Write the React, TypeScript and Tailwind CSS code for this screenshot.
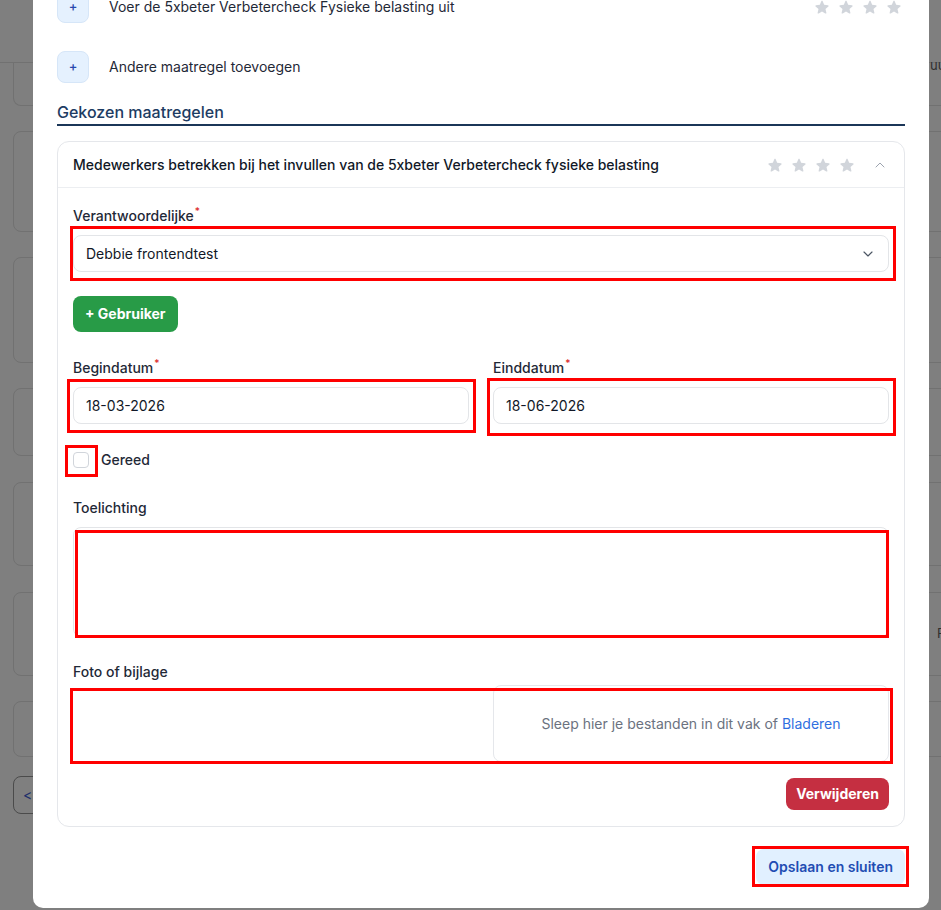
import React from "react";
import { ChevronDown, ChevronUp } from "lucide-react";

const STAR =
  "M10.868 2.884c-.321-.772-1.415-.772-1.736 0l-1.83 4.401-4.753.381c-.833.067-1.171 1.107-.536 1.651l3.62 3.102-1.106 4.637c-.194.813.691 1.456 1.405 1.02L10 15.591l4.069 2.485c.713.436 1.598-.207 1.404-1.02l-1.106-4.637 3.62-3.102c.635-.544.297-1.584-.536-1.65l-4.752-.382-1.831-4.401Z";

function Stars() {
  return (
    <div className="flex items-center gap-2">
      {[0, 1, 2, 3].map((i) => (
        <svg key={i} viewBox="0 0 20 20" className="h-4 w-4 fill-[#d1d5db]">
          <path d={STAR} />
        </svg>
      ))}
    </div>
  );
}

function Mark({ className }: { className: string }) {
  return <div className={"pointer-events-none absolute border-[3px] border-[#ff0000] " + className} />;
}

function Label({ children, required }: { children: React.ReactNode; required?: boolean }) {
  return (
    <div className="flex h-5 items-center text-sm font-medium leading-5 text-[#1f2937]">
      <span>{children}</span>
      {required && <span className="-mt-[10px] ml-[1px] text-[10px] leading-none text-[#dc2626]">*</span>}
    </div>
  );
}

function OptionRow({ text, stars }: { text: string; stars?: boolean }) {
  return (
    <div className="flex h-[60px] items-center">
      <div className="flex h-8 w-8 items-center justify-center rounded-lg border border-[#d6e6f8] bg-[#e5f1fe] text-[13px] font-medium text-[#2848ad]">
        +
      </div>
      <span className="ml-5 text-sm text-[#1f2937]">{text}</span>
      {stars && (
        <div className="ml-auto mr-[3px]">
          <Stars />
        </div>
      )}
    </div>
  );
}

function BackgroundPage() {
  const card = "w-[1000px] rounded-lg border border-[#717171]";
  return (
    <div className="flex flex-col">
      <div className="h-[63px] border-b border-[#717171]" />
      <div className="flex flex-col pl-[13px]">
        <div className="flex h-[43px] w-[1000px] rounded-b-lg border-x border-b border-[#717171]">
          <span className="-mt-[5px] ml-[916px] text-[13px] leading-[14px] text-[#2f2f2f]">uur</span>
        </div>
        <div className={card + " mt-[25px] h-[101px]"} />
        <div className={card + " mt-[25px] h-[106px]"} />
        <div className={card + " mt-[25px] h-[68px]"} />
        <div className={card + " mt-[26px] h-[84px]"} />
        <div className={card + " mt-[26px] flex h-[84px] items-center"}>
          <span className="ml-[923px] text-[13px] text-[#2f2f2f]">F</span>
        </div>
        <div className={card + " mt-[25px] h-[56px]"} />
        <div className="mt-[19px] flex h-[38px] w-[44px] items-center rounded-lg border border-[#4b4b4b] pl-[9px] text-sm text-[#1e2f6b]">
          &lt;
        </div>
      </div>
    </div>
  );
}

export default function App() {
  return (
    <div
      className="relative h-[910px] w-[941px] overflow-hidden bg-[#7f7f7f]"
      style={{ fontFamily: "Inter, 'Noto Sans', sans-serif" }}
    >
      <BackgroundPage />

      {/* dialog */}
      <div className="absolute left-[33px] top-[-23px] h-[931px] w-[896px] rounded-b-[10px] bg-white px-6">
        <OptionRow text="Voer de 5xbeter Verbetercheck Fysieke belasting uit" stars />
        <OptionRow text="Andere maatregel toevoegen" />

        <div className="mt-[3px] border-b-2 border-[#1b3658] text-base font-medium leading-6 text-[#1d3c63]">
          Gekozen maatregelen
        </div>

        <div className="mt-[15px] rounded-xl border border-[#e5e7eb]">
          <div className="flex h-[46px] items-center border-b border-[#eceef1] px-[15px]">
            <span className="text-sm font-medium text-[#111827]">
              Medewerkers betrekken bij het invullen van de 5xbeter Verbetercheck fysieke belasting
            </span>
            <div className="ml-auto flex items-center">
              <Stars />
              <ChevronUp className="ml-[17px] mr-[1px] h-4 w-4 text-[#9ca3af]" strokeWidth={1.5} />
            </div>
          </div>

          <div className="px-[15px] pb-4 pt-[18px]">
            <Label required>Verantwoordelijke</Label>
            <div className="relative mt-[9px]">
              <div className="flex h-[37px] items-center rounded-lg border border-[#e3e5e8] px-3 text-sm text-[#111827]">
                <span>Debbie frontendtest</span>
                <ChevronDown className="ml-auto h-4 w-4 text-[#4b5563]" strokeWidth={1.75} />
              </div>
              <Mark className="-bottom-[9px] -left-[3px] -right-[7px] -top-[9px]" />
            </div>

            <button className="mt-6 flex h-9 items-center rounded-lg bg-[#289b47] px-3 text-sm font-bold text-white">
              + Gebruiker
            </button>

            <div className="mt-[26px] grid grid-cols-2 gap-x-6">
              <div>
                <Label required>Begindatum</Label>
                <div className="relative mt-[9px]">
                  <div className="flex h-[37px] items-center rounded-lg border border-[#e3e5e8] px-3 text-sm text-[#111827]">
                    18-03-2026
                  </div>
                  <Mark className="-bottom-[9px] -left-[6px] -right-[7px] -top-[8px]" />
                </div>
              </div>
              <div>
                <Label required>Einddatum</Label>
                <div className="relative mt-[9px]">
                  <div className="flex h-[37px] items-center rounded-lg border border-[#e3e5e8] px-3 text-sm text-[#111827]">
                    18-06-2026
                  </div>
                  <Mark className="-bottom-[12px] -left-[6px] -right-[7px] -top-[9px]" />
                </div>
              </div>
            </div>

            <div className="mt-[26px] flex h-5 items-center">
              <div className="relative">
                <div className="h-4 w-4 rounded-[4px] border border-[#d1d5db] bg-white" />
                <Mark className="-bottom-[9px] -left-[8px] -right-[9px] -top-[7px]" />
              </div>
              <span className="ml-3 text-sm font-medium text-[#1f2937]">Gereed</span>
            </div>

            <div className="mt-7">
              <Label>Toelichting</Label>
            </div>
            <div className="relative mt-[9px]">
              <div className="h-[110px] rounded-lg border border-[#e3e5e8]" />
              <Mark className="-bottom-[1px] left-[2px] right-0 top-[3px]" />
            </div>

            <div className="mt-[25px]">
              <Label>Foto of bijlage</Label>
            </div>
            <div className="relative mt-[3px] grid grid-cols-2 gap-x-6">
              <div />
              <div className="flex h-[77px] items-center justify-center rounded-lg border border-[#e5e7eb] text-sm text-[#6b7280]">
                <span>
                  Sleep hier je bestanden in dit vak of <span className="text-[#2f6fe0]">Bladeren</span>
                </span>
              </div>
              <Mark className="-bottom-[2px] -left-[3px] -right-[4px] top-[3px]" />
            </div>

            <div className="mt-4 flex justify-end">
              <button className="flex h-8 items-center rounded-lg bg-[#c52f41] px-[10px] text-sm font-bold text-white">
                Verwijderen
              </button>
            </div>
          </div>
        </div>

        <div className="mt-[22px] flex justify-end">
          <div className="relative">
            <button className="flex h-9 items-center rounded-lg bg-[#e1f0ff] px-3 text-sm font-semibold text-[#1f4db3]">
              Opslaan en sluiten
            </button>
            <Mark className="-bottom-[2px] -left-[4px] -right-[4px] -top-[3px]" />
          </div>
        </div>
      </div>
    </div>
  );
}
